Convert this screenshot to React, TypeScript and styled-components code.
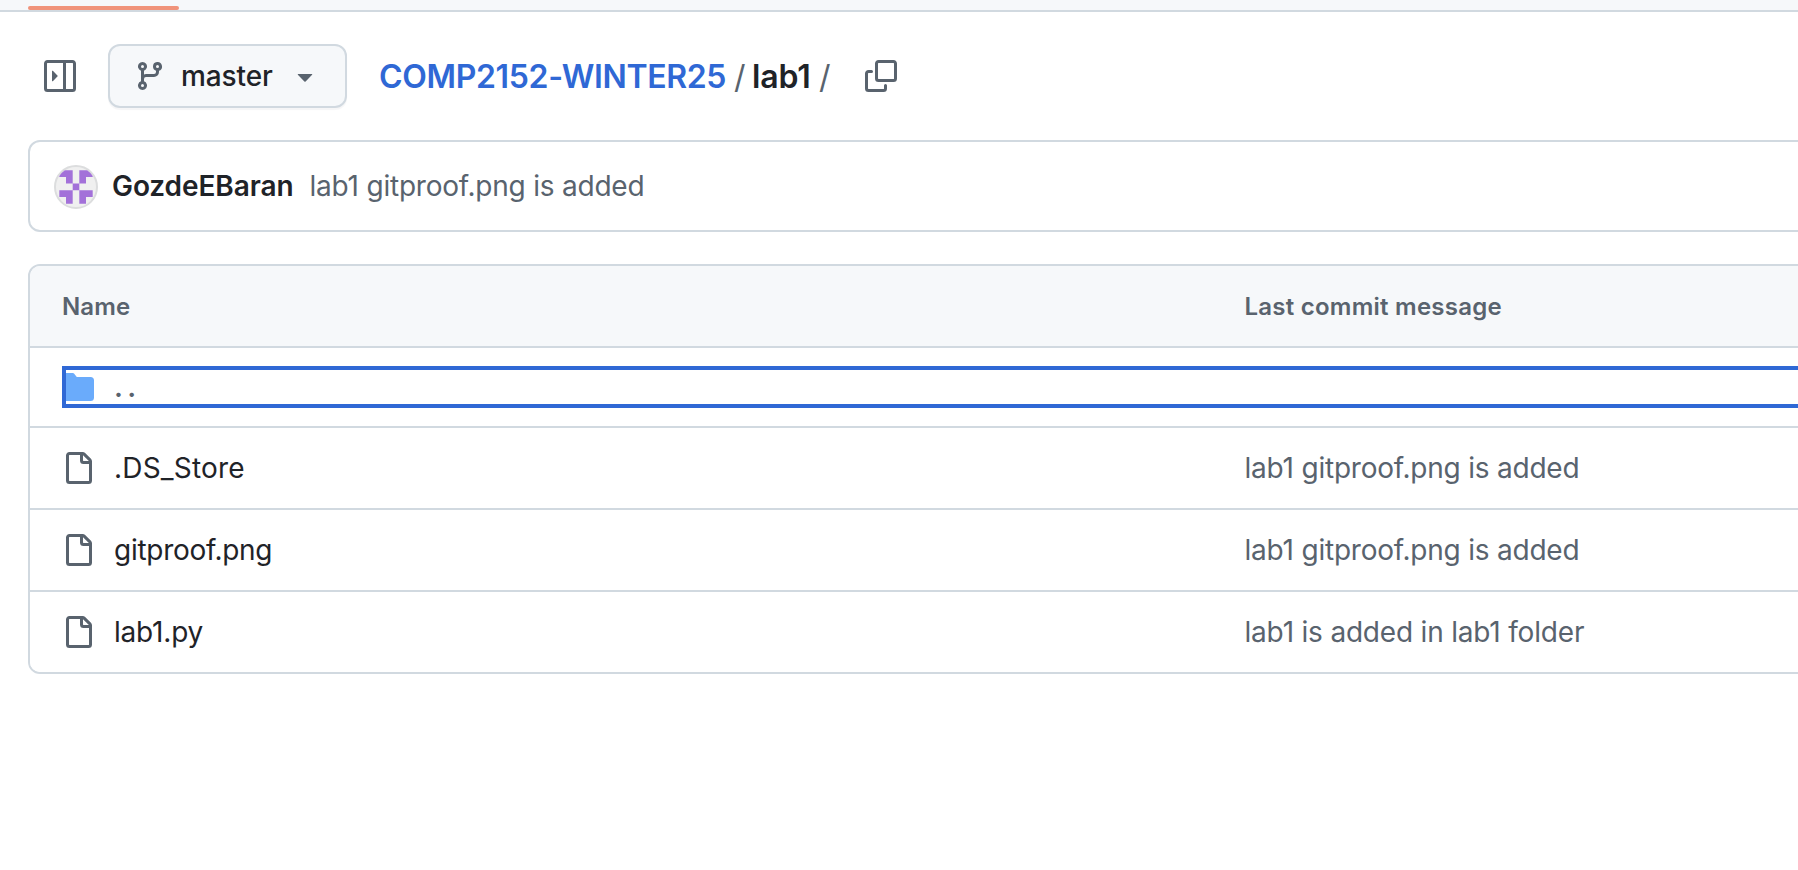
import React from "react";
import styled, { createGlobalStyle } from "styled-components";

const color = {
  border: "#d1d9e0",
  subtle: "#f6f8fa",
  text: "#1f2328",
  muted: "#59636e",
  accent: "#2f68d5",
  folder: "#6aabfb",
  tab: "#f0937a",
};

const GlobalStyle = createGlobalStyle`
  * { box-sizing: border-box; }
  body {
    margin: 0;
    background: #fff;
    color: ${color.text};
    font-family: Inter, "Liberation Sans", sans-serif;
    font-size: 28px;
    overflow: hidden;
  }
`;

const Page = styled.div`
  width: 100vw;
  height: 870px;
  overflow: hidden;
`;

const TabStrip = styled.div`
  display: flex;
  align-items: flex-end;
  height: 12px;
  padding-left: 28px;
  background: ${color.subtle};
  border-bottom: 2px solid ${color.border};
`;

const ActiveTab = styled.div`
  width: 151px;
  height: 4px;
  border-radius: 2px;
  background: ${color.tab};
`;

const Toolbar = styled.header`
  display: flex;
  align-items: center;
  height: 128px;
  padding-left: 44px;
`;

const Icon = styled.svg<{ $color?: string }>`
  display: block;
  flex: none;
  width: 32px;
  height: 32px;
  fill: ${(p) => p.$color ?? color.muted};
`;

const BranchButton = styled.button`
  display: flex;
  align-items: center;
  width: 239px;
  height: 64px;
  margin: 0 32px 0 32px;
  padding: 0 24px;
  border: 2px solid ${color.border};
  border-radius: 12px;
  background: ${color.subtle};
  box-shadow: 0 2px 1px rgba(31, 35, 40, 0.04);
  color: ${color.text};
  font: inherit;
`;

const Label = styled.span<{
  $width: number;
  $size?: number;
  $weight?: number;
  $spacing?: number;
  $color?: string;
  $shift?: number;
}>`
  flex: none;
  width: ${(p) => p.$width}px;
  white-space: nowrap;
  line-height: 40px;
  font-size: ${(p) => p.$size ?? 28}px;
  font-weight: ${(p) => p.$weight ?? 400};
  letter-spacing: ${(p) => p.$spacing ?? 0}px;
  color: ${(p) => p.$color ?? color.text};
  padding-top: ${(p) => p.$shift ?? 0}px;
`;

const BranchName = styled(Label)`
  margin-left: 15px;
  text-align: left;
`;

const CommitBar = styled.section`
  display: flex;
  align-items: center;
  height: 92px;
  margin: 0 -20px 32px 28px;
  padding-left: 24px;
  border: 2px solid ${color.border};
  border-radius: 12px;
`;

const Avatar = styled.svg`
  flex: none;
  width: 44px;
  height: 44px;
  margin: 2px 14px 0 0;
`;

const Table = styled.section`
  margin: 0 -20px 0 28px;
  border: 2px solid ${color.border};
  border-radius: 12px;
  overflow: hidden;
`;

const Row = styled.div<{ $head?: boolean; $height?: number }>`
  display: grid;
  grid-template-columns: 1182.5px 1fr;
  align-items: center;
  height: ${(p) => p.$height ?? 82}px;
  padding-left: 32px;
  background: ${(p) => (p.$head ? color.subtle : "#fff")};
  border-bottom: 2px solid ${color.border};

  &:last-child {
    height: 80px;
    border-bottom: 0;
  }
`;

const FileCell = styled.div`
  display: flex;
  align-items: center;
  gap: 20px;
`;

const ParentLink = styled.a`
  grid-column: 1 / -1;
  display: flex;
  align-items: center;
  gap: 20px;
  height: 42px;
  outline: 4px solid ${color.accent};
  outline-offset: -4px;
`;

const paths = {
  sidebar:
    "M6.823 7.823a.25.25 0 0 1 0 .354l-2.396 2.396A.25.25 0 0 1 4 10.396V5.604a.25.25 0 0 1 .427-.177Z M1.75 0h12.5C15.216 0 16 .784 16 1.75v12.5A1.75 1.75 0 0 1 14.25 16H1.75A1.75 1.75 0 0 1 0 14.25V1.75C0 .784.784 0 1.75 0ZM1.5 1.75v12.5c0 .138.112.25.25.25H9.5v-13H1.75a.25.25 0 0 0-.25.25ZM11 14.5h3.25a.25.25 0 0 0 .25-.25V1.75a.25.25 0 0 0-.25-.25H11Z",
  branch:
    "M9.5 3.25a2.25 2.25 0 1 1 3 2.122V6A2.5 2.5 0 0 1 10 8.5H6a1 1 0 0 0-1 1v1.128a2.251 2.251 0 1 1-1.5 0V5.372a2.25 2.25 0 1 1 1.5 0v1.836A2.493 2.493 0 0 1 6 7h4a1 1 0 0 0 1-1v-.628A2.25 2.25 0 0 1 9.5 3.25Zm-6 0a.75.75 0 1 0 1.5 0 .75.75 0 0 0-1.5 0Zm8.25-.75a.75.75 0 1 0 0 1.5.75.75 0 0 0 0-1.5ZM4.25 12a.75.75 0 1 0 0 1.5.75.75 0 0 0 0-1.5Z",
  caret:
    "m4.427 7.427 3.396 3.396a.25.25 0 0 0 .354 0l3.396-3.396A.25.25 0 0 0 11.396 7H4.604a.25.25 0 0 0-.177.427Z",
  copy:
    "M0 6.75C0 5.784.784 5 1.75 5h1.5a.75.75 0 0 1 0 1.5h-1.5a.25.25 0 0 0-.25.25v7.5c0 .138.112.25.25.25h7.5a.25.25 0 0 0 .25-.25v-1.5a.75.75 0 0 1 1.5 0v1.5A1.75 1.75 0 0 1 9.25 16h-7.5A1.75 1.75 0 0 1 0 14.25Z M5 1.75C5 .784 5.784 0 6.75 0h7.5C15.216 0 16 .784 16 1.75v7.5A1.75 1.75 0 0 1 14.25 11h-7.5A1.75 1.75 0 0 1 5 9.25Zm1.75-.25a.25.25 0 0 0-.25.25v7.5c0 .138.112.25.25.25h7.5a.25.25 0 0 0 .25-.25v-7.5a.25.25 0 0 0-.25-.25Z",
  file:
    "M2 1.75C2 .784 2.784 0 3.75 0h6.586c.464 0 .909.184 1.237.513l2.914 2.914c.329.328.513.773.513 1.237v9.586A1.75 1.75 0 0 1 13.25 16h-9.5A1.75 1.75 0 0 1 2 14.25Zm1.75-.25a.25.25 0 0 0-.25.25v12.5c0 .138.112.25.25.25h9.5a.25.25 0 0 0 .25-.25V6h-2.75A1.75 1.75 0 0 1 9 4.25V1.5Zm6.75.062V4.25c0 .138.112.25.25.25h2.688l-.011-.013-2.914-2.914-.013-.011Z",
  folder:
    "M1.75 1A1.75 1.75 0 0 0 0 2.75v10.5C0 14.216.784 15 1.75 15h12.5A1.75 1.75 0 0 0 16 13.25v-8.5A1.75 1.75 0 0 0 14.25 3H7.5a.25.25 0 0 1-.2-.1l-.9-1.2C6.07 1.26 5.55 1 5 1H1.75Z",
};

const Glyph = ({ name, fill }: { name: keyof typeof paths; fill?: string }) => (
  <Icon viewBox="0 0 16 16" $color={fill} aria-hidden>
    <path d={paths[name]} />
  </Icon>
);

const files = [
  { name: ".DS_Store", nameSpacing: 0.2, message: "lab1 gitproof.png is added", spacing: -0.21 },
  { name: "gitproof.png", nameSpacing: -0.28, message: "lab1 gitproof.png is added", spacing: -0.21 },
  { name: "lab1.py", nameSpacing: -0.2, message: "lab1 is added in lab1 folder", spacing: -0.19 },
];

export default function App() {
  return (
    <Page>
      <GlobalStyle />
      <TabStrip>
        <ActiveTab />
      </TabStrip>

      <Toolbar>
        <Glyph name="sidebar" />
        <BranchButton>
          <Glyph name="branch" />
          <BranchName $width={108} $weight={500} $spacing={-0.1}>master</BranchName>
          <Glyph name="caret" />
        </BranchButton>
        <Label $width={355} $size={32} $weight={600} $spacing={-0.34} $color={color.accent} $shift={2}>
          COMP2152-WINTER25
        </Label>
        <Label $width={18} $size={32} $color={color.muted} $shift={2}>/</Label>
        <Label $width={67} $size={32} $weight={600} $spacing={-0.1} $shift={2}>lab1</Label>
        <Label $width={46} $size={32} $color={color.muted} $shift={2}>/</Label>
        <Glyph name="copy" />
      </Toolbar>

      <CommitBar>
        <Avatar viewBox="0 0 44 44" aria-hidden>
          <defs>
            <clipPath id="avatar-disc">
              <circle cx="22" cy="22" r="20" />
            </clipPath>
          </defs>
          <circle cx="22" cy="22" r="21" fill="#f0f0f0" stroke="#dcddde" strokeWidth="2" />
          <path
            clipPath="url(#avatar-disc)"
            fill="#a371d9"
            d="M5.3 5.2H18.7V18.6H12V11.9H5.3ZM25.3 5.2H38.7V11.9H32V18.6H25.3ZM18.7 18.6H25.3V25.3H18.7ZM5.3 25.3H18.7V38.7H12V32H5.3ZM25.3 25.3H38.7V32H32V38.7H25.3Z"
          />
        </Avatar>
        <Label $width={197.5} $weight={600} $spacing={-0.08}>GozdeEBaran</Label>
        <Label $width={400} $spacing={-0.21} $color={color.muted}>lab1 gitproof.png is added</Label>
      </CommitBar>

      <Table>
        <Row $head>
          <Label $width={400} $size={24} $weight={600} $spacing={0.15} $color={color.muted} $shift={2}>Name</Label>
          <Label $width={400} $size={24} $weight={600} $spacing={0.24} $color={color.muted} $shift={2}>Last commit message</Label>
        </Row>
        <Row $height={80}>
          <ParentLink>
            <Glyph name="folder" fill={color.folder} />
            <Label $width={60} $weight={600} $spacing={4.4} $color={color.muted}>..</Label>
          </ParentLink>
        </Row>
        {files.map((file) => (
          <Row key={file.name}>
            <FileCell>
              <Glyph name="file" />
              <Label $width={400} $spacing={file.nameSpacing}>{file.name}</Label>
            </FileCell>
            <Label $width={500} $spacing={file.spacing} $color={color.muted}>{file.message}</Label>
          </Row>
        ))}
      </Table>
    </Page>
  );
}
